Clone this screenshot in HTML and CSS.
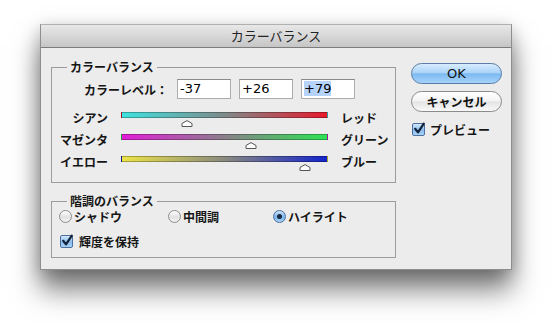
FILE: index.html
```html
<!DOCTYPE html>
<html lang="ja">
<head>
<meta charset="utf-8">
<title>カラーバランス</title>
<link rel="stylesheet" href="styles.css">
</head>
<body>
<div class="window">
  <div class="titlebar">カラーバランス</div>
  <div class="content">
    <div class="main">
      <fieldset class="group group-color">
        <legend>カラーバランス</legend>
        <div class="levels">
          <span class="levels-label">カラーレベル：</span>
          <span class="field">-37</span>
          <span class="field">+26</span>
          <span class="field"><span class="sel">+79</span></span>
        </div>
        <div class="sliders">
          <span class="sl-left">シアン</span>
          <div class="track cyan-red">
            <svg class="thumb" style="left: 31.5%" width="11" height="7" viewBox="0 0 11 7"><path d="M0.5 6.5V3.5L5.5 0.6L10.5 3.5V6.5Z"/></svg>
          </div>
          <span class="sl-right">レッド</span>

          <span class="sl-left">マゼンタ</span>
          <div class="track magenta-green">
            <svg class="thumb" style="left: 63%" width="11" height="7" viewBox="0 0 11 7"><path d="M0.5 6.5V3.5L5.5 0.6L10.5 3.5V6.5Z"/></svg>
          </div>
          <span class="sl-right">グリーン</span>

          <span class="sl-left">イエロー</span>
          <div class="track yellow-blue">
            <svg class="thumb" style="left: 89.5%" width="11" height="7" viewBox="0 0 11 7"><path d="M0.5 6.5V3.5L5.5 0.6L10.5 3.5V6.5Z"/></svg>
          </div>
          <span class="sl-right">ブルー</span>
        </div>
      </fieldset>

      <fieldset class="group group-tone">
        <legend>階調のバランス</legend>
        <div class="radios">
          <span class="radio-item w1"><span class="radio"></span>シャドウ</span>
          <span class="radio-item w2"><span class="radio"></span>中間調</span>
          <span class="radio-item"><span class="radio on"><span class="dot"></span></span>ハイライト</span>
        </div>
        <div class="check-row">
          <span class="checkbox"><svg width="14" height="14" viewBox="0 0 14 14"><path d="M3.2 6.8L6 10.4L11.8 1.6"/></svg></span>
          <span>輝度を保持</span>
        </div>
      </fieldset>
    </div>

    <div class="side">
      <div class="btn btn-ok">OK</div>
      <div class="btn btn-cancel">キャンセル</div>
      <div class="check-row preview">
        <span class="checkbox"><svg width="14" height="14" viewBox="0 0 14 14"><path d="M3.2 6.8L6 10.4L11.8 1.6"/></svg></span>
        <span>プレビュー</span>
      </div>
    </div>
  </div>
</div>
</body>
</html>
```

FILE: styles.css
```css
html {
  background: #ffffff;
}

body {
  margin: 0;
  min-height: 324px;
  background: #ffffff;
  font-family: "Noto Sans CJK JP", "DejaVu Sans", sans-serif;
  font-size: 12px;
  font-weight: 700;
  color: #151515;
}

.window {
  box-sizing: border-box;
  width: 472px;
  height: 246px;
  margin: 24px 0 54px 40px;
  background: #ececec;
  border: 1px solid #8e8e8e;
  border-top-color: #b0b0b0;
  box-shadow: 0 20px 26px rgba(0, 0, 0, 0.5), 0 4px 16px rgba(0, 0, 0, 0.22);
}

.titlebar {
  height: 22px;
  border-bottom: 1px solid #7c7c7c;
  background: linear-gradient(#e8e8e8, #c6c6c6);
  text-align: center;
  font-size: 13px;
  font-weight: 400;
  line-height: 22px;
  color: #222;
}

.content {
  display: flex;
  padding: 12px 0 0 10px;
}

.main {
  width: 345px;
}

.group {
  box-sizing: border-box;
  width: 345px;
  min-width: 0;
  margin: 0;
  border: 1px solid #9b9b9b;
}

.group legend {
  margin-left: 15px;
  padding: 0 3px;
  line-height: 14px;
}

.group-color {
  padding: 5px 0 6px;
}

.levels {
  display: flex;
  align-items: center;
  gap: 8px;
  height: 20px;
}

.levels-label {
  width: 116px;
  margin-right: 1px;
  text-align: right;
}

.field {
  box-sizing: border-box;
  width: 54px;
  height: 20px;
  padding-left: 2px;
  background: #fff;
  border: 1px solid #acacac;
  border-top-color: #8a8a8a;
  font-family: "DejaVu Sans", sans-serif;
  font-size: 13px;
  font-weight: 400;
  line-height: 18px;
  color: #000;
}

.sel {
  background: #b5d3fb;
}

.sliders {
  display: grid;
  grid-template-columns: 56px 207px auto;
  grid-auto-rows: 22px;
  column-gap: 13px;
  margin-top: 11px;
}

.sl-left {
  text-align: right;
  line-height: 16px;
}

.sl-right {
  line-height: 16px;
}

.track {
  position: relative;
  box-sizing: border-box;
  height: 6px;
  margin-top: 2px;
  border: 1px solid rgba(0, 0, 0, 0.28);
}

.cyan-red {
  background: linear-gradient(to right, #3fe2df, #7f8a8a 50%, #e61a2c);
}

.magenta-green {
  background: linear-gradient(to right, #e21ed8, #8a7f8a 50%, #2ee254);
}

.yellow-blue {
  background: linear-gradient(to right, #ece447, #8a8a80 50%, #1424cc);
}

.thumb {
  position: absolute;
  top: 7px;
  transform: translateX(-50%);
  overflow: visible;
}

.thumb path {
  fill: #fff;
  stroke: #555;
  stroke-width: 1;
}

.group-tone {
  margin-top: 11px;
  padding: 2px 0 9px;
}

.radios {
  display: flex;
  height: 13px;
  padding-left: 7px;
}

.radio-item {
  display: flex;
  align-items: center;
  gap: 2px;
  line-height: 13px;
}

.w1 { width: 109px; }
.w2 { width: 105px; }

.radio {
  box-sizing: border-box;
  width: 13px;
  height: 13px;
  border-radius: 50%;
  border: 1px solid #8e8e8e;
  background: linear-gradient(#fdfdfd, #e2e2e2 55%, #f2f2f2);
  display: flex;
  align-items: center;
  justify-content: center;
}

.radio.on {
  border-color: #4d6f9e;
  background: linear-gradient(#cde4fa, #7ab3ea 55%, #a9d3f8);
}

.dot {
  width: 5px;
  height: 5px;
  border-radius: 50%;
  background: #1b2a44;
}

.check-row {
  display: flex;
  align-items: center;
  gap: 6px;
  height: 13px;
  margin-top: 12px;
  padding-left: 8px;
}

.checkbox {
  position: relative;
  box-sizing: border-box;
  width: 13px;
  height: 13px;
  border: 1px solid #4d6f9e;
  border-radius: 2px;
  background: linear-gradient(#d3e8fb, #86bcec 55%, #a8d2f7);
}

.checkbox svg {
  position: absolute;
  left: -1px;
  top: -2px;
}

.checkbox path {
  fill: none;
  stroke: #14213a;
  stroke-width: 2.2;
  stroke-linecap: round;
  stroke-linejoin: round;
}

.side {
  width: 91px;
  margin-left: 15px;
  padding-top: 3px;
}

.btn {
  box-sizing: border-box;
  height: 21px;
  border-radius: 11px;
  text-align: center;
  line-height: 19px;
  color: #111;
}

.btn-ok {
  border: 1px solid #5a7ca6;
  background: linear-gradient(#d8ecfd 0%, #acd4f8 45%, #7cbaf2 52%, #a6d3fb 100%);
  font-family: "DejaVu Sans", sans-serif;
  font-size: 13px;
  font-weight: 400;
}

.btn-cancel {
  margin-top: 7px;
  border: 1px solid #8b8b8b;
  background: linear-gradient(#ffffff 0%, #f4f4f4 45%, #e4e4e4 52%, #f8f8f8 100%);
}

.preview {
  margin-top: 10px;
  padding-left: 1px;
  gap: 5px;
  height: 14px;
}
```
